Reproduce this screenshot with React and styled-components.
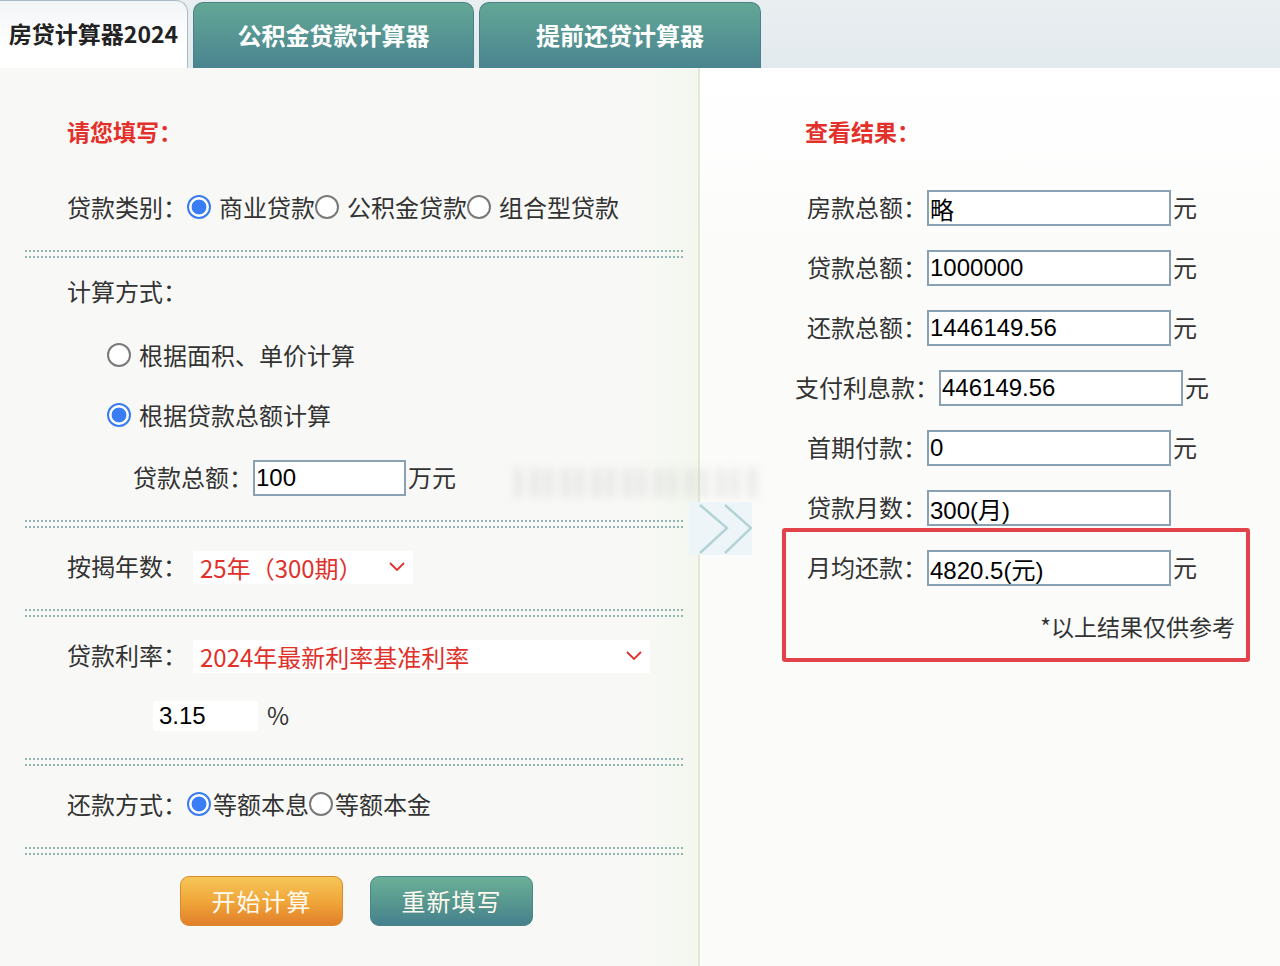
import React from 'react';
import styled, { createGlobalStyle } from 'styled-components';

const GlobalStyle = createGlobalStyle`
  body {
    margin: 0;
    background: #ffffff;
    font-family: "Noto Sans CJK SC", "Noto Sans", sans-serif;
    color: #333;
  }
`;

const Page = styled.div`
  width: 1280px;
  height: 966px;
  display: flex;
  flex-direction: column;
  overflow: hidden;
`;

const TabBar = styled.div`
  display: flex;
  gap: 5px;
  height: 68px;
  background: linear-gradient(#e9eef1, #e3eaed);
  flex-shrink: 0;
`;

const Tab = styled.div`
  display: flex;
  align-items: center;
  justify-content: center;
  box-sizing: border-box;
  width: ${p => p.$w}px;
  padding-bottom: 3px;
  font-weight: 700;
  font-size: ${p => (p.$active ? 23 : 24)}px;
  ${p => p.$active ? `
    height: 68px;
    color: #222;
    background: linear-gradient(#f2f5f7, #ffffff 70%);
    border: 1px solid #a9bcc4;
    border-left: none;
    border-bottom: none;
    border-radius: 0 12px 0 0;
  ` : `
    height: 66px;
    margin-top: 2px;
    color: #fff;
    background: linear-gradient(#63a796, #4a8490);
    border: 1px solid #4b8088;
    border-bottom: none;
    border-radius: 10px 10px 0 0;
  `}
`;

const Main = styled.div`
  flex: 1;
  display: flex;
  position: relative;
`;

const LeftPanel = styled.div`
  width: 700px;
  box-sizing: border-box;
  padding: 35px 14px 0 25px;
  background: linear-gradient(to right, #f8f9f7 0%, #f8f9f6 92%, #f3f7ee 100%);
  border-right: 2px solid #dfe9d3;
`;

const RightPanel = styled.div`
  flex: 1;
  position: relative;
  box-sizing: border-box;
  padding: 35px 0 0 24px;
  background: linear-gradient(#ffffff, #fbfcfa 20%);
`;

const Heading = styled.div`
  height: 60px;
  box-sizing: border-box;
  padding-bottom: 4px;
  margin-bottom: 15px;
  display: flex;
  align-items: center;
  padding-left: ${p => p.$indent || 0}px;
  color: #e3302b;
  font-weight: 700;
  font-size: 23px;
`;

const Row = styled.div`
  height: ${p => p.$h || 60}px;
  box-sizing: border-box;
  padding-bottom: 4px;
  margin-top: ${p => p.$mt || 0}px;
  display: flex;
  align-items: center;
  padding-left: ${p => p.$indent || 42}px;
  font-size: 24px;
  color: #333;
  white-space: nowrap;
`;

const Label = styled.span`
  display: inline-block;
  flex-shrink: 0;
`;

const Separator = styled.div`
  margin: 12px 0 9px;
  height: 8px;
  background:
    repeating-linear-gradient(to right, #94b4b4 0 2px, transparent 2px 4px) top / 100% 2px no-repeat,
    repeating-linear-gradient(to right, #94b4b4 0 2px, transparent 2px 4px) bottom / 100% 2px no-repeat;
`;

const Radio = styled.span`
  display: inline-block;
  flex-shrink: 0;
  box-sizing: border-box;
  width: 24px;
  height: 24px;
  border-radius: 50%;
  margin-right: ${p => (p.$tight ? 2 : 8)}px;
  margin-top: 1px;
  border: 2px solid ${p => (p.$checked ? '#3a7cf0' : '#7a7a7a')};
  background: ${p => (p.$checked
    ? 'radial-gradient(circle, #3a7ef6 0 7px, #ffffff 7.8px)'
    : '#fff')};
`;

const Option = styled.span`
  display: inline-flex;
  align-items: center;
`;

const TextInput = styled.div`
  box-sizing: border-box;
  width: ${p => p.$w}px;
  height: 36px;
  margin-top: 4px;
  border: 2px solid #8aa1b4;
  background: #fff;
  display: flex;
  align-items: center;
  padding-left: 1px;
  font-family: "Liberation Sans", "Noto Sans CJK SC", sans-serif;
  font-size: 24px;
  color: #000;
  flex-shrink: 0;
`;

const PlainInput = styled.div`
  box-sizing: border-box;
  width: 105px;
  height: 30px;
  margin-left: 86px;
  margin-top: 4px;
  background: #fff;
  display: flex;
  align-items: center;
  padding-left: 6px;
  font-family: "Liberation Sans", sans-serif;
  font-size: 24px;
  color: #000;
`;

const Unit = styled.span`
  display: inline-block;
  width: ${p => p.$w || 24}px;
  margin-left: ${p => p.$ml || 2}px;
  flex-shrink: 0;
`;

const Select = styled.div`
  box-sizing: border-box;
  width: ${p => p.$w}px;
  height: 33px;
  margin-left: 6px;
  margin-top: 4px;
  padding: 0 8px 0 7px;
  background: #fff;
  display: flex;
  align-items: center;
  justify-content: space-between;
  color: #e0312b;
  font-size: 24px;
`;

const ButtonRow = styled.div`
  display: flex;
  gap: 27px;
  padding-left: 155px;
  margin-top: 21px;
`;

const Button = styled.div`
  width: 163px;
  height: 50px;
  box-sizing: border-box;
  border-radius: 9px;
  display: flex;
  align-items: center;
  justify-content: center;
  padding-bottom: 2px;
  font-size: 24px;
  color: #fffaf0;
  letter-spacing: 1px;
  ${p => p.$variant === 'orange' ? `
    background: linear-gradient(#f6c658 0%, #f0a73a 50%, #e27f2a 100%);
    border: 1px solid #d98a2c;
  ` : `
    background: linear-gradient(#6bb097 0%, #56968f 55%, #46808d 100%);
    border: 1px solid #4a8689;
  `}
`;

const ResultRow = styled.div`
  height: 60px;
  box-sizing: border-box;
  padding-bottom: 4px;
  display: flex;
  align-items: center;
  justify-content: center;
  font-size: 24px;
  color: #333;
  white-space: nowrap;
`;

const Note = styled.div`
  height: 60px;
  box-sizing: border-box;
  padding-bottom: 4px;
  display: flex;
  align-items: center;
  justify-content: flex-end;
  padding-right: 45px;
  font-size: 23px;
  color: #333;
`;

const Arrow = styled.div`
  position: absolute;
  left: 689px;
  top: 434px;
  width: 63px;
  height: 53px;
  background: #eef5f8;
  display: flex;
  align-items: center;
  justify-content: center;
`;

const Smudge = styled.div`
  position: absolute;
  left: 515px;
  top: 400px;
  width: 245px;
  height: 30px;
  filter: blur(4px);
  opacity: 0.22;
  background: repeating-linear-gradient(to right, #9a9a9a 0 6px, transparent 6px 14px, #bbb 14px 26px, transparent 26px 31px);
`;

const Highlight = styled.div`
  position: absolute;
  left: 82px;
  top: 460px;
  width: 468px;
  height: 134px;
  box-sizing: border-box;
  border: 4px solid #e2434b;
  border-radius: 3px;
  pointer-events: none;
`;

const Chevron = ({ color = '#e0312b' }) => (
  <svg width="16" height="10" viewBox="0 0 16 10">
    <polyline points="1,1 8,8 15,1" fill="none" stroke={color} strokeWidth="1.8" />
  </svg>
);

const results = [
  { label: '房款总额：', value: '略', unit: '元' },
  { label: '贷款总额：', value: '1000000', unit: '元' },
  { label: '还款总额：', value: '1446149.56', unit: '元' },
  { label: '支付利息款：', value: '446149.56', unit: '元' },
  { label: '首期付款：', value: '0', unit: '元' },
  { label: '贷款月数：', value: '300(月)', unit: '' },
  { label: '月均还款：', value: '4820.5(元)', unit: '元' },
];

const App = () => (
  <Page>
    <GlobalStyle />
    <TabBar>
      <Tab $active $w={188}>房贷计算器2024</Tab>
      <Tab $w={281}>公积金贷款计算器</Tab>
      <Tab $w={282}>提前还贷计算器</Tab>
    </TabBar>
    <Main>
      <LeftPanel>
        <Heading $indent={42}>请您填写：</Heading>
        <Row>
          <Label>贷款类别：</Label>
          <Option><Radio $checked />商业贷款</Option>
          <Option><Radio />公积金贷款</Option>
          <Option><Radio />组合型贷款</Option>
        </Row>
        <Separator />
        <Row $h={50}>
          <Label>计算方式：</Label>
        </Row>
        <Row $mt={9} $indent={82}>
          <Option><Radio />根据面积、单价计算</Option>
        </Row>
        <Row $indent={82}>
          <Option><Radio $checked />根据贷款总额计算</Option>
        </Row>
        <Row $mt={2} $indent={108}>
          <Label>贷款总额：</Label>
          <TextInput $w={153}>100</TextInput>
          <Unit $w={48}>万元</Unit>
        </Row>
        <Separator />
        <Row>
          <Label>按揭年数：</Label>
          <Select $w={220}>25年（300期）<Chevron /></Select>
        </Row>
        <Separator />
        <Row>
          <Label>贷款利率：</Label>
          <Select $w={457}>2024年最新利率基准利率<Chevron /></Select>
        </Row>
        <Row>
          <PlainInput>3.15</PlainInput>
          <Unit $w={30} $ml={9}>%</Unit>
        </Row>
        <Separator />
        <Row>
          <Label>还款方式：</Label>
          <Option><Radio $checked $tight />等额本息</Option>
          <Option><Radio $tight />等额本金</Option>
        </Row>
        <Separator />
        <ButtonRow>
          <Button $variant="orange">开始计算</Button>
          <Button $variant="teal">重新填写</Button>
        </ButtonRow>
      </LeftPanel>
      <RightPanel>
        <Heading $indent={81}>查看结果：</Heading>
        {results.map(r => (
          <ResultRow key={r.label}>
            <Label>{r.label}</Label>
            <TextInput $w={244}>{r.value}</TextInput>
            <Unit>{r.unit}</Unit>
          </ResultRow>
        ))}
        <Note>*以上结果仅供参考</Note>
        <Highlight />
      </RightPanel>
      <Smudge />
      <Arrow>
        <svg width="63" height="53" viewBox="0 0 63 53">
          <polyline points="11,3 38,26 11,51" fill="none" stroke="#b3d4d6" strokeWidth="2.5" />
          <polyline points="36,3 62,26 36,51" fill="none" stroke="#b3d4d6" strokeWidth="2.5" />
        </svg>
      </Arrow>
    </Main>
  </Page>
);

export default App;
